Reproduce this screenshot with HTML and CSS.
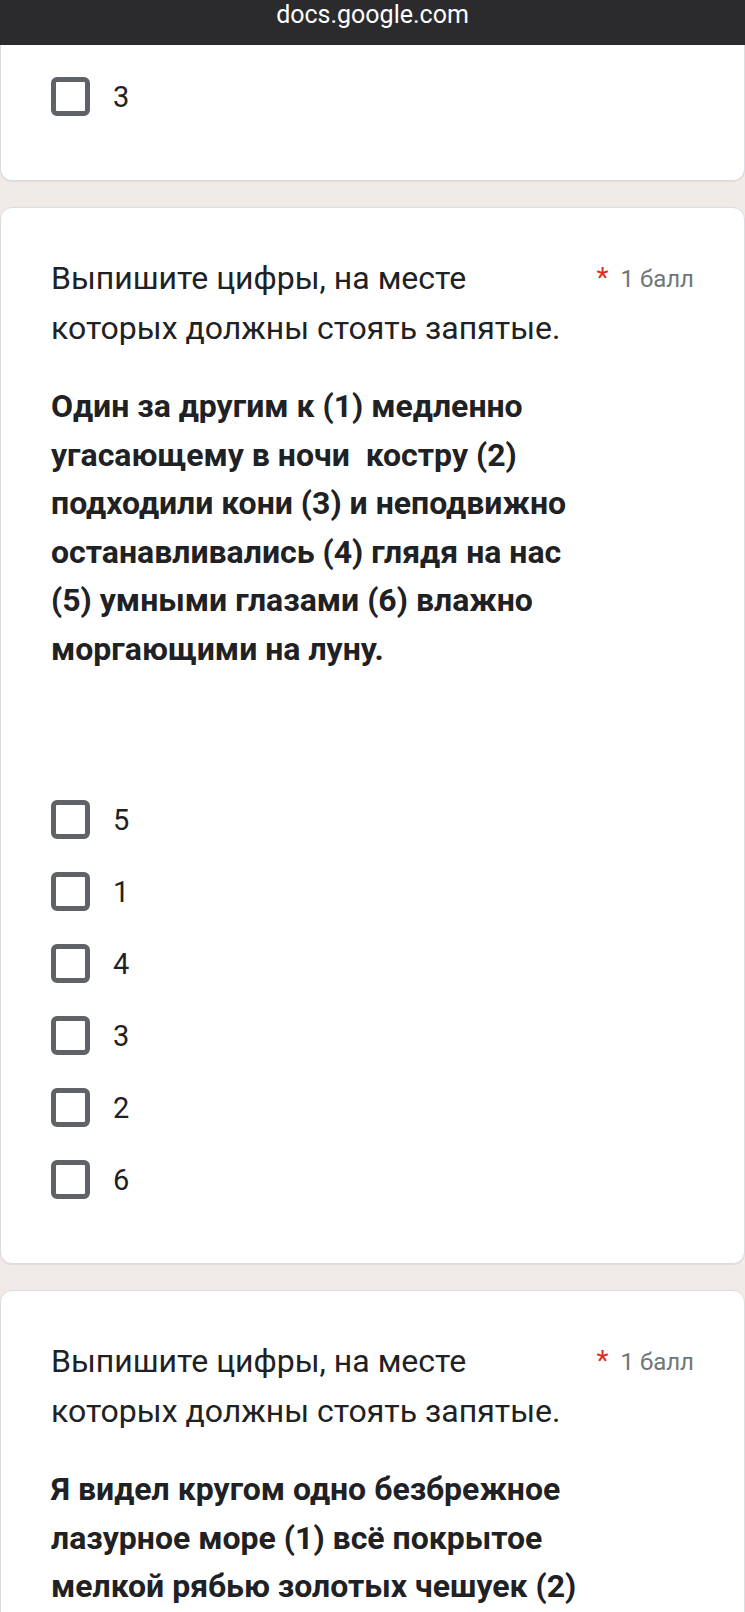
FILE: index.html
```html
<!DOCTYPE html>
<html lang="ru">
<head>
<meta charset="utf-8">
<title>docs.google.com</title>
<link rel="stylesheet" href="styles.css">
</head>
<body>
<div class="topbar">docs.google.com</div>
<main class="form">
  <section class="card card-cut">
    <div class="options">
      <label class="option"><span class="box"></span><span class="opt-text">3</span></label>
    </div>
  </section>

  <section class="card">
    <div class="q-head">
      <div class="q-main">
        <div class="q-title">Выпишите цифры, на месте которых должны стоять запятые.</div>
        <div class="q-desc">Один за другим к (1) медленно угасающему в ночи  костру (2) подходили кони (3) и неподвижно останавливались (4) глядя на нас (5) умными глазами (6) влажно моргающими на луну.</div>
      </div>
      <div class="q-side"><span class="req">*</span><span class="points">1 балл</span></div>
    </div>
    <div class="options options-gap">
      <label class="option"><span class="box"></span><span class="opt-text">5</span></label>
      <label class="option"><span class="box"></span><span class="opt-text">1</span></label>
      <label class="option"><span class="box"></span><span class="opt-text">4</span></label>
      <label class="option"><span class="box"></span><span class="opt-text">3</span></label>
      <label class="option"><span class="box"></span><span class="opt-text">2</span></label>
      <label class="option"><span class="box"></span><span class="opt-text">6</span></label>
    </div>
  </section>

  <section class="card card-last">
    <div class="q-head">
      <div class="q-main">
        <div class="q-title">Выпишите цифры, на месте которых должны стоять запятые.</div>
        <div class="q-desc">Я видел кругом одно безбрежное лазурное море (1) всё покрытое мелкой рябью золотых чешуек (2)</div>
      </div>
      <div class="q-side"><span class="req">*</span><span class="points">1 балл</span></div>
    </div>
  </section>
</main>
</body>
</html>
```

FILE: styles.css
```css
* { box-sizing: border-box; }

html, body {
  margin: 0;
  padding: 0;
}

body {
  background: #f1ebe7;
  font-family: Roboto, "Noto Sans", "Liberation Sans", sans-serif;
  color: #202124;
}

.topbar {
  height: 45px;
  background: #2b2b2d;
  color: #ffffff;
  font-size: 25px;
  line-height: 30px;
  text-align: center;
}

.form {
  display: flex;
  flex-direction: column;
  gap: 26px;
}

.card {
  background: #ffffff;
  border: 1px solid #dadce0;
  border-radius: 12px;
  box-shadow: 0 1px 1px rgba(0, 0, 0, 0.06);
  padding: 45px 50px 64px 50px;
}

.card-cut {
  border-top: none;
  border-top-left-radius: 0;
  border-top-right-radius: 0;
  padding-top: 32px;
}

.card-last {
  padding-bottom: 80px;
}

.q-head {
  display: flex;
  align-items: flex-start;
}

.q-main {
  flex: 1;
  min-width: 0;
}

.q-title {
  font-size: 32px;
  line-height: 50px;
  color: #202124;
}

.q-desc {
  margin-top: 29px;
  font-size: 32px;
  line-height: 48.5px;
  font-weight: 700;
  color: #202124;
  white-space: pre-wrap;
}

.q-side {
  display: flex;
  align-items: baseline;
  margin-left: 6px;
  line-height: 50px;
}

.req {
  color: #d93025;
  font-size: 28px;
  margin-right: 12px;
}

.points {
  color: #70757a;
  font-size: 24px;
}

.options {
  display: flex;
  flex-direction: column;
  gap: 33px;
}

.options-gap {
  margin-top: 127px;
}

.option {
  display: flex;
  align-items: center;
  height: 39px;
}

.box {
  width: 39px;
  height: 39px;
  border: 5px solid #5f6368;
  border-radius: 6px;
  flex: none;
}

.opt-text {
  margin-left: 23px;
  font-size: 29px;
  color: #202124;
}
```
